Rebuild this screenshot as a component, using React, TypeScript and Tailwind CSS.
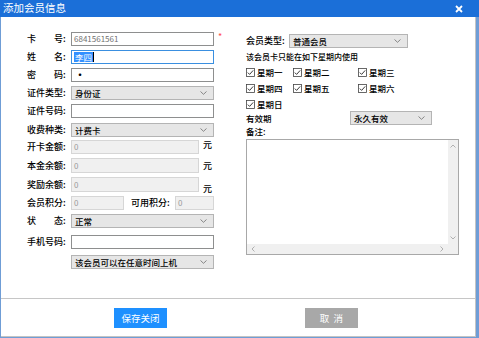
import React from 'react';

const Chevron: React.FC = () => (
    <svg width="7" height="4" viewBox="0 0 7 4" className="shrink-0">
        <path d="M0.5 0.5 L3.5 3.3 L6.5 0.5" fill="none" stroke="#7a7a7a" strokeWidth="0.9" />
    </svg>
);

const Select: React.FC<{ value: string; className: string }> = ({ value, className }) => (
    <div className={`h-[14px] flex items-center justify-between pl-[3px] pr-[6px] bg-[#e6e6e6] border border-[#b4b4b4] text-[8.5px] font-medium text-black ${className}`}>
        <span>{value}</span>
        <Chevron />
    </div>
);

const Field: React.FC<{ className: string; children?: React.ReactNode; disabled?: boolean; focus?: boolean }> = ({ className, children, disabled, focus }) => (
    <div
        className={`h-[14px] flex items-center px-[2px] border text-[8px] ${
            disabled ? 'bg-[#f0f0f0] border-[#d6d6d6] text-[#9a9a9a]' : focus ? 'bg-white border-[#3a8fe0]' : 'bg-white border-[#8e8f8f]'
        } ${className}`}
    >
        {children}
    </div>
);

const Label: React.FC<{ children: React.ReactNode }> = ({ children }) => (
    <div className="w-[44px] shrink-0 text-[9px] font-medium text-black whitespace-pre">{children}</div>
);

const Check: React.FC<{ label: string; className: string }> = ({ label, className }) => (
    <div className={`flex items-center gap-[2px] ${className}`}>
        <svg width="9" height="9" viewBox="0 0 9 9">
            <rect x="0.5" y="0.5" width="8" height="8" fill="white" stroke="#444" strokeWidth="0.8" />
            <path d="M1.8 4.6 L3.6 6.4 L7.2 2.4" fill="none" stroke="#222" strokeWidth="0.9" />
        </svg>
        <span className="text-[8.5px] font-medium text-black">{label}</span>
    </div>
);

const App: React.FC = () => {
    return (
        <div className="w-[479px] h-[338px] flex flex-col bg-[#6f9dd6] font-['Noto_Sans_CJK_SC','Microsoft_YaHei',sans-serif] overflow-hidden">
            <div className="h-[17px] shrink-0 flex items-center justify-between bg-[#1b6fd8] pl-[3px] pr-[16px]">
                <span className="text-[10.5px] text-white leading-none">添加会员信息</span>
                <svg width="8" height="8" viewBox="0 0 8 8">
                    <path d="M1 1 L7 7 M7 1 L1 7" stroke="white" strokeWidth="1.8" />
                </svg>
            </div>

            <div className="flex-1 flex flex-col ml-[1px] mr-[3px] mb-[1px] bg-white border-r border-b border-[#c4c4c4]">
                <div className="h-[282px] flex border-b border-[#c6c6c6]">
                    {/* left column */}
                    <div className="w-[245px] shrink-0 pl-[26px] pt-[15px] flex flex-col gap-[4px]">
                        <div className="flex items-center">
                            <Label>{'卡　　号:'}</Label>
                            <Field className="w-[143px] text-[#707070]">6841561561</Field>
                            <span className="ml-[4px] text-[9px] text-[#ff4d4d] self-start -mt-[2px]">*</span>
                        </div>
                        <div className="flex items-center">
                            <Label>{'姓　　名:'}</Label>
                            <Field focus className="w-[143px]">
                                <span className="bg-[#3390ff] text-white text-[8.5px] leading-[10px] px-[1px]">李四</span>
                                <span className="w-[1px] h-[10px] bg-black" />
                            </Field>
                        </div>
                        <div className="flex items-center">
                            <Label>{'密　　码:'}</Label>
                            <Field className="w-[143px]">
                                <span className="text-black text-[12px] leading-none">•</span>
                            </Field>
                        </div>
                        <div className="flex items-center">
                            <Label>证件类型:</Label>
                            <Select value="身份证" className="w-[143px]" />
                        </div>
                        <div className="flex items-center">
                            <Label>证件号码:</Label>
                            <Field className="w-[143px]" />
                        </div>
                        <div className="flex items-center mt-[1px]">
                            <Label>收费种类:</Label>
                            <Select value="计费卡" className="w-[143px]" />
                        </div>
                        <div className="flex items-center -mt-[1px]">
                            <Label>开卡金额:</Label>
                            <Field disabled className="w-[128px]">0</Field>
                            <span className="ml-[4px] text-[9px] font-medium text-black self-start -mt-[2px]">元</span>
                        </div>
                        <div className="flex items-center">
                            <Label>本金余额:</Label>
                            <Field disabled className="w-[128px] h-[15px]">0</Field>
                            <span className="ml-[4px] text-[9px] font-medium text-black">元</span>
                        </div>
                        <div className="flex items-center">
                            <Label>奖励余额:</Label>
                            <Field disabled className="w-[128px] h-[15px]">0</Field>
                            <span className="ml-[4px] text-[9px] font-medium text-black self-end -mb-[3px]">元</span>
                        </div>
                        <div className="flex items-center">
                            <Label>会员积分:</Label>
                            <Field disabled className="w-[53px]">0</Field>
                            <span className="ml-[7px] w-[44px] text-[9px] font-medium text-black">可用积分:</span>
                            <Field disabled className="w-[39px]">0</Field>
                        </div>
                        <div className="flex items-center">
                            <Label>{'状　　态:'}</Label>
                            <Select value="正常" className="w-[143px]" />
                        </div>
                        <div className="flex items-center mt-[3px]">
                            <Label>手机号码:</Label>
                            <Field className="w-[143px]" />
                        </div>
                        <div className="flex items-center mt-[2px]">
                            <Label>{''}</Label>
                            <Select value="该会员可以在任意时间上机" className="w-[143px]" />
                        </div>
                    </div>

                    {/* right column */}
                    <div className="w-[213px] shrink-0 pt-[17px] flex flex-col">
                        <div className="flex items-center">
                            <span className="w-[43px] text-[9px] font-medium text-black">会员类型:</span>
                            <Select value="普通会员" className="w-[119px]" />
                        </div>
                        <div className="h-[14px] mt-[2px] flex items-center text-[8px] font-medium text-black">该会员卡只能在如下星期内使用</div>
                        <div className="h-[16px] flex items-center">
                            <Check label="星期一" className="w-[47px]" />
                            <Check label="星期二" className="w-[65px]" />
                            <Check label="星期三" className="w-[60px]" />
                        </div>
                        <div className="h-[16px] flex items-center">
                            <Check label="星期四" className="w-[47px]" />
                            <Check label="星期五" className="w-[65px]" />
                            <Check label="星期六" className="w-[60px]" />
                        </div>
                        <div className="h-[16px] flex items-center">
                            <Check label="星期日" className="w-[47px]" />
                        </div>
                        <div className="h-[14px] -mt-[1px] flex items-center">
                            <span className="w-[104px] text-[8.5px] font-medium text-black">有效期</span>
                            <Select value="永久有效" className="w-[82px] h-[13px]" />
                        </div>
                        <div className="h-[13px] flex items-center text-[8.5px] font-medium text-black">备注:</div>
                        <div className="mt-[1px] w-[213px] h-[116px] border border-[#a8a8a8] flex flex-col">
                            <div className="flex-1 flex">
                                <div className="flex-1 bg-white" />
                                <div className="w-[10px] bg-[#f0f0f0] flex flex-col items-center justify-between py-[4px]">
                                    <svg width="6" height="4" viewBox="0 0 6 4">
                                        <path d="M0.5 3.5 L3 1 L5.5 3.5" fill="none" stroke="#a0a0a0" strokeWidth="0.8" />
                                    </svg>
                                    <svg width="6" height="4" viewBox="0 0 6 4">
                                        <path d="M0.5 0.5 L3 3 L5.5 0.5" fill="none" stroke="#a0a0a0" strokeWidth="0.8" />
                                    </svg>
                                </div>
                            </div>
                            <div className="h-[10px] flex">
                                <div className="flex-1 bg-[#f0f0f0] flex items-center justify-between px-[4px]">
                                    <svg width="4" height="6" viewBox="0 0 4 6">
                                        <path d="M3.5 0.5 L1 3 L3.5 5.5" fill="none" stroke="#a0a0a0" strokeWidth="0.8" />
                                    </svg>
                                    <svg width="4" height="6" viewBox="0 0 4 6">
                                        <path d="M0.5 0.5 L3 3 L0.5 5.5" fill="none" stroke="#a0a0a0" strokeWidth="0.8" />
                                    </svg>
                                </div>
                                <div className="w-[10px] bg-[#f0f0f0]" />
                            </div>
                        </div>
                    </div>
                </div>

                <div className="flex-1 flex items-start pt-[9px] pl-[113px]">
                    <button className="w-[53px] h-[20px] bg-[#1e90ff] text-white text-[9.5px] flex items-center justify-center">保存关闭</button>
                    <button className="ml-[138px] w-[53px] h-[20px] bg-[#a8a8a8] text-white text-[9.5px] flex items-center justify-center whitespace-pre">{'取  消'}</button>
                </div>
            </div>
        </div>
    );
};

export default App;
